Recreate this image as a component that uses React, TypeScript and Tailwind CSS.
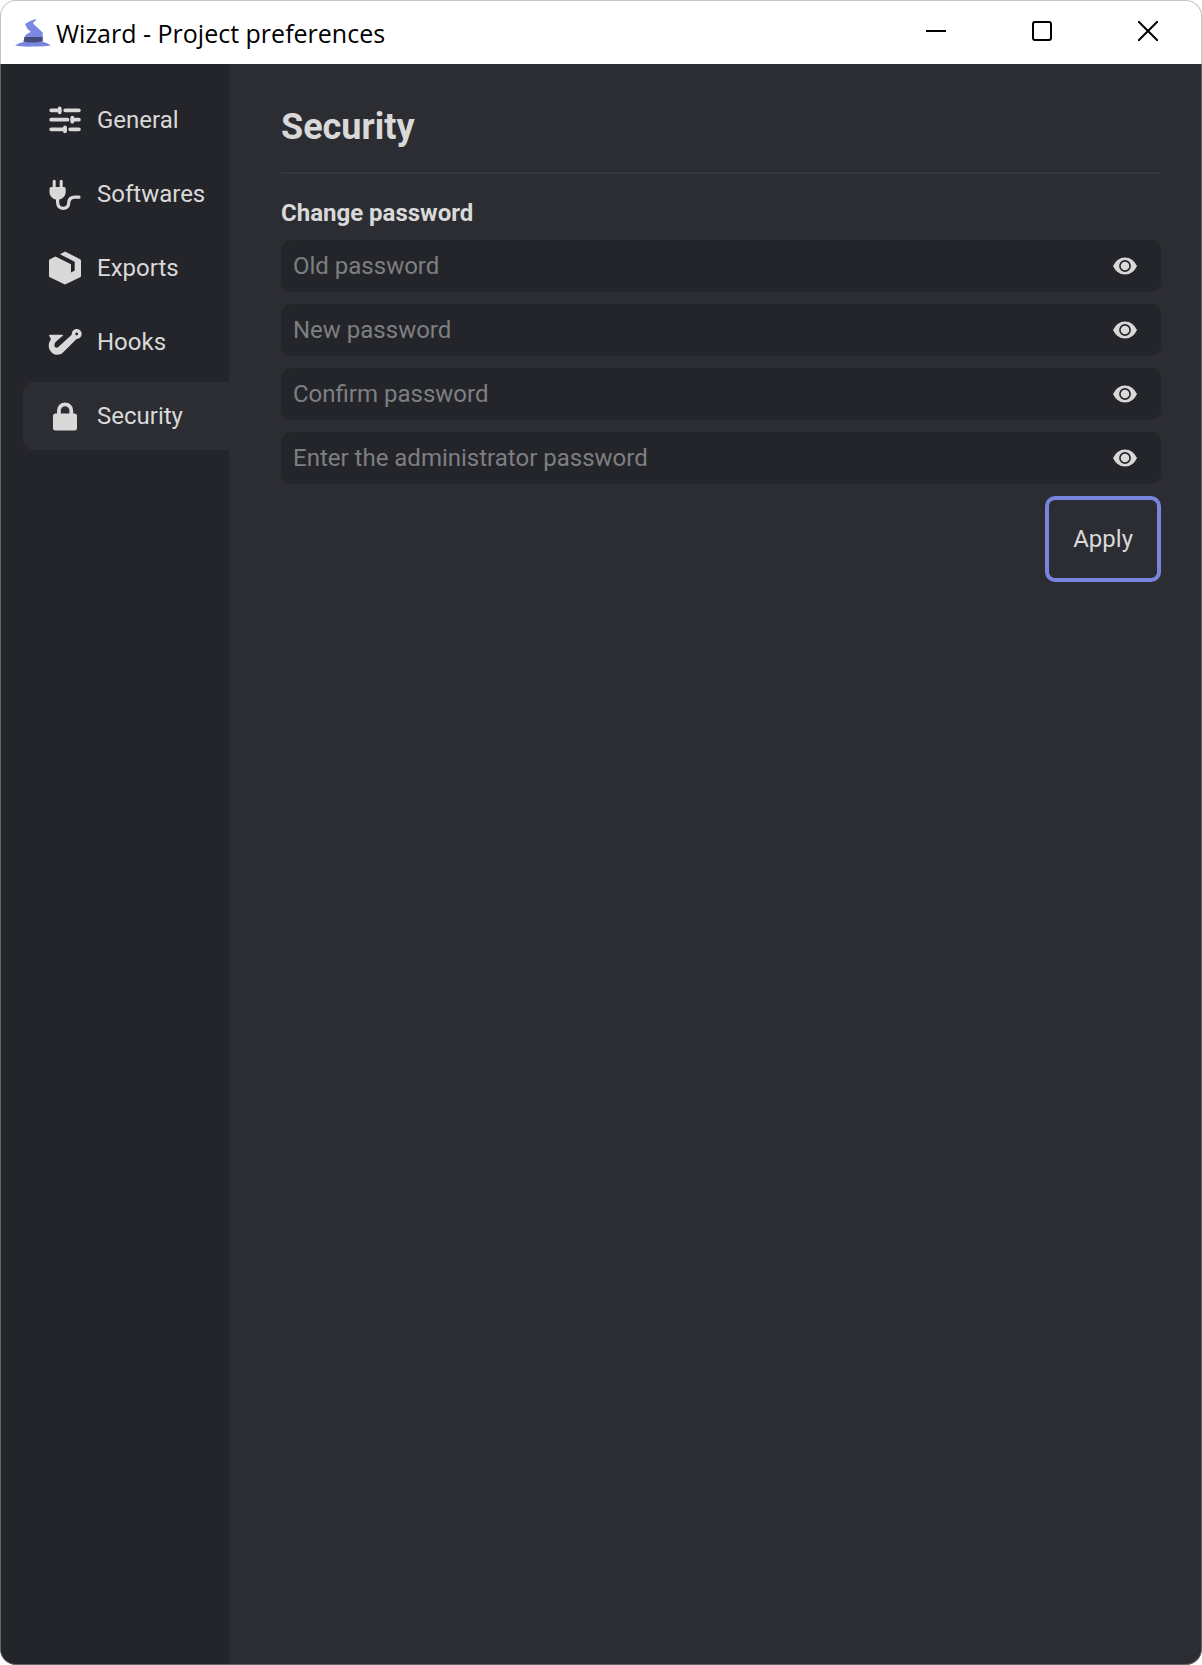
import { useState } from "react";
import type { ReactNode } from "react";

type Page = {
  name: string;
  icon: ReactNode;
};

const pages: Page[] = [
  { name: "General", icon: <SlidersIcon /> },
  { name: "Softwares", icon: <PlugIcon /> },
  { name: "Exports", icon: <BoxIcon /> },
  { name: "Hooks", icon: <HookIcon /> },
  { name: "Security", icon: <LockIcon /> },
];

const fields = [
  "Old password",
  "New password",
  "Confirm password",
  "Enter the administrator password",
];

function HatIcon() {
  return (
    <svg viewBox="0 0 36 30" className="h-[30px] w-9 shrink-0">
      <path
        d="M0 26.500Q4 23.500 9 23L27 22.500Q33 24 36 26.500Q28 27.800 18 27.500Q7 28 0 26.500Z"
        fill="#7785de"
      />
      <path
        d="M20.700 0L21 1.200Q18.500 2.500 18 4.500L27.700 13.500V23.500Q18 26 8.500 23.500L9.500 18Q10.500 15 16 13L12.500 10L10 5Q15 1.500 20.700 0Z"
        fill="#7b89e3"
      />
      <path d="M9.500 18H27.600V22L22 23.500H13L8.500 22.500L9.500 18Z" fill="#454d7c" />
    </svg>
  );
}

function SlidersIcon() {
  return (
    <svg viewBox="0 0 32 32" className="size-8" stroke="currentColor" strokeWidth="3.8" strokeLinecap="round">
      <path d="M2.200 6.300H10.700M16.200 6.300H29.900M2.200 15.700H18.500M23.300 15.700H29.900M2.200 25.300H16M21.200 25.300H29.900" />
      <path d="M10.700 4.300V8.300M23.300 13.700V17.700M16 23.300V27.300" />
    </svg>
  );
}

function PlugIcon() {
  return (
    <svg viewBox="0 0 32 32" className="size-8 overflow-visible">
      <path
        d="M2.300 9H3.700V3.200a1.500 1.500 0 0 1 3 0V9h4V3.200a1.500 1.500 0 0 1 3 0V9h1.200a1.800 1.800 0 0 1 1.800 1.800V14c0 3.500-2.500 6.500-6 7.500H6.500C3 20.500.500 17.500.500 14v-3.200A1.800 1.800 0 0 1 2.300 9Z"
        fill="currentColor"
      />
      <path
        d="M8.600 20V24.500Q9 30.300 14 30.300Q19.500 30.300 19.700 25Q20 19.200 26 19.200H30"
        fill="none"
        stroke="currentColor"
        strokeWidth="3.2"
        strokeLinecap="round"
      />
    </svg>
  );
}

function BoxIcon() {
  return (
    <svg viewBox="0 0 32 32" className="size-8 overflow-visible" fill="currentColor">
      <path d="M16 -.500L31.200 7.200Q32 7.700 32 8.700V23.700Q32 24.700 31.200 25.200L16 32.500L.800 25.200Q0 24.700 0 23.700V8.700Q0 7.700 .800 7.200L6.500 4.500L22 12.200V20.500L25.700 18.500V9.700L11 2.200Z" />
    </svg>
  );
}

function HookIcon() {
  return (
    <svg viewBox="0 0 32 32" className="size-8 overflow-visible">
      <path
        d="M0 9.200Q0 8.700.800 8.700H13.800Q14.600 8.800 14 9.400L6.500 16C5 18.500 5.200 20.500 6.200 21.300C7.300 22.200 8.600 21.700 9.600 20.800L23.500 8L28 12.500L14 26.500C11.500 29 7 29.600 3.500 27.200C-1 24-1.500 17.500 2 13.300L.300 10Z"
        fill="currentColor"
      />
      <circle cx="27.700" cy="8" r="3.200" fill="#24252a" stroke="currentColor" strokeWidth="3.600" />
    </svg>
  );
}

function LockIcon() {
  return (
    <svg viewBox="0 0 32 32" className="size-8">
      <rect x="4" y="13.500" width="24" height="17" rx="2.500" fill="currentColor" />
      <path d="M9.900 15V10.600a6.200 6.200 0 0 1 12.400 0V15" fill="none" stroke="currentColor" strokeWidth="3.800" />
    </svg>
  );
}

function EyeIcon() {
  return (
    <svg viewBox="0 0 24 18" className="h-[18px] w-6">
      <path d="M0 9Q4 .400 12 .400T24 9Q20 17.600 12 17.600T0 9Z" fill="currentColor" />
      <circle cx="12" cy="9" r="5.100" fill="currentColor" stroke="#24252a" strokeWidth="1.600" />
    </svg>
  );
}

function TitleBar() {
  return (
    <header className="flex h-16 shrink-0 justify-between rounded-t-2xl border border-b-0 border-[#c4c4c4] bg-white pl-[14px] text-black">
      <div className="flex items-center gap-[5px] pt-[2px]">
        <HatIcon />
        <h1 className="font-['Open_Sans',sans-serif] text-[25px]">Wizard - Project preferences</h1>
      </div>
      <div className="flex pb-1">
        <button aria-label="Minimize" className="flex w-[106px] items-center justify-center">
          <svg viewBox="0 0 20 20" className="size-5" stroke="currentColor" strokeWidth="2">
            <path d="M0 10H20" />
          </svg>
        </button>
        <button aria-label="Maximize" className="flex w-[106px] items-center justify-center">
          <svg viewBox="0 0 20 20" className="size-5" fill="none" stroke="currentColor" strokeWidth="2">
            <rect x="1" y="1" width="18" height="18" rx="2" />
          </svg>
        </button>
        <button aria-label="Close" className="flex w-[106px] items-center justify-center">
          <svg viewBox="0 0 20 20" className="size-5" stroke="currentColor" strokeWidth="2">
            <path d="M0 0L20 20M20 0L0 20" />
          </svg>
        </button>
      </div>
    </header>
  );
}

function PasswordField({ label }: { label: string }) {
  const [visible, setVisible] = useState<boolean>(false);

  return (
    <div className="flex h-[52px] items-center rounded-[10px] bg-[#24252a] pr-[18px] pl-3">
      <input
        type={visible ? "text" : "password"}
        aria-label={label}
        placeholder={label}
        className="h-full min-w-0 grow bg-transparent outline-none placeholder:text-[#7e7f81]"
      />
      <button
        type="button"
        aria-label="Show password"
        className="flex size-9 items-center justify-center"
        onClick={() => setVisible(!visible)}
      >
        <EyeIcon />
      </button>
    </div>
  );
}

export default function App() {
  const [active, setActive] = useState<string>("Security");

  return (
    <div className="flex min-h-screen flex-col font-[Roboto,sans-serif] text-2xl text-[#d9d9d9]">
      <TitleBar />
      <div className="flex grow overflow-hidden rounded-b-2xl border border-t-0 border-[#626366] bg-[#2c2d32]">
        <nav className="flex w-[228px] shrink-0 flex-col gap-[6px] bg-[#24252a] pt-[22px] pl-[22px]">
          {pages.map((page) => (
            <button
              key={page.name}
              onClick={() => setActive(page.name)}
              className={`flex h-[68px] items-center gap-4 rounded-l-[10px] pl-[26px] ${
                active === page.name ? "bg-[#2c2d32]" : ""
              }`}
            >
              {page.icon}
              {page.name}
            </button>
          ))}
        </nav>
        <main className="flex min-w-0 grow flex-col pt-[43px] pr-10 pl-[52px]">
          <h2 className="border-b-2 border-[#36373c] pb-[25px] text-4xl font-bold">{active}</h2>
          <h3 className="mt-[23px] mb-[11px] font-bold">Change password</h3>
          <form className="flex flex-col gap-3" onSubmit={(e) => e.preventDefault()}>
            {fields.map((field) => (
              <PasswordField key={field} label={field} />
            ))}
            <button className="h-[86px] self-end rounded-[10px] border-4 border-[#7785de] px-6">
              Apply
            </button>
          </form>
        </main>
      </div>
    </div>
  );
}
